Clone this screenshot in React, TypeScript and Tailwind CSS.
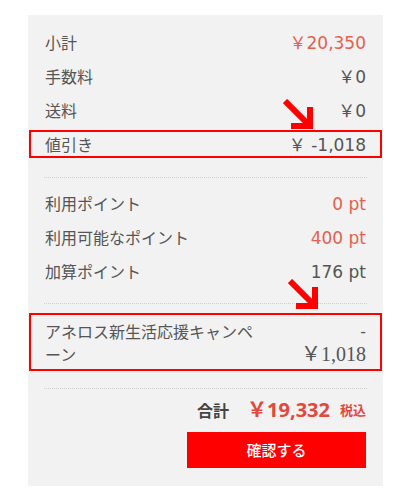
import type { ReactNode } from "react";

type RowProps = {
  label: ReactNode;
  value: ReactNode;
  red?: boolean;
  highlight?: boolean;
};

function Row({ label, value, red, highlight }: RowProps) {
  return (
    <div
      className={`h-[28px] flex items-center justify-between border-2 px-[14px] ${
        highlight ? "border-[#ff0000]" : "border-transparent"
      }`}
    >
      <span className="text-[16px] text-[#555]">{label}</span>
      <span
        className={`mt-[4px] font-['DejaVu_Sans','Noto_Sans_CJK_JP',sans-serif] text-[17px] ${
          red ? "text-[#e5604e]" : "text-[#555]"
        }`}
      >
        {value}
      </span>
    </div>
  );
}

function Arrow({ className }: { className: string }) {
  return (
    <svg
      className={`absolute ${className}`}
      width="31"
      height="31"
      viewBox="0 0 31 31"
      fill="none"
      stroke="#ff0000"
      strokeWidth="6"
    >
      <path d="M2 2 L25 25" />
      <path d="M27 8 V27 H8" strokeLinejoin="miter" />
    </svg>
  );
}

function Divider({ className }: { className: string }) {
  return <div className={`mx-[15px] border-t border-dotted border-[#cfcfcf] ${className}`} />;
}

export default function App() {
  return (
    <div className="min-h-screen bg-white pt-[15px] pl-[28px] font-['Noto_Sans_CJK_JP',sans-serif]">
      <div className="relative w-[355px] bg-[#f2f2f2] px-px pt-[13px] pb-[18px]">
        <div className="flex flex-col gap-[6px]">
          <Row label="小計" value="￥20,350" red />
          <Row label="手数料" value="￥0" />
          <Row label="送料" value="￥0" />
          <Row label="値引き" value="￥ -1,018" highlight />
        </div>

        <Divider className="mt-[19px]" />

        <div className="mt-[11px] flex flex-col gap-[6px]">
          <Row label="利用ポイント" value="0 pt" red />
          <Row label="利用可能なポイント" value="400 pt" red />
          <Row label="加算ポイント" value="176 pt" />
        </div>

        <Divider className="mt-[18px]" />

        <div className="mt-[9px] flex justify-between border-2 border-[#ff0000] px-[14px] pt-[5px] pb-[3px]">
          <span className="w-[215px] break-all text-[16px] leading-[23px] text-[#555]">
            アネロス新生活応援キャンペーン
          </span>
          <div className="flex flex-col items-end text-[#555] leading-[23px]">
            <span className="font-['DejaVu_Sans',sans-serif] text-[16px]">-</span>
            <span className="font-['Liberation_Serif','Noto_Sans_CJK_JP',serif] text-[20px]">
              ￥1,018
            </span>
          </div>
        </div>

        <Divider className="mt-[17px]" />

        <div className="mt-[7px] h-[28px] flex items-center justify-end gap-[10px] pr-[16px]">
          <span className="text-[16px] font-bold text-[#444]">合計</span>
          <span className="ml-[8px] font-['Open_Sans','Noto_Sans_CJK_JP',sans-serif] text-[20px] font-bold text-[#e2483b]">
            ￥19,332
          </span>
          <span className="text-[13px] font-bold text-[#e2483b]">税込</span>
        </div>

        <div className="mt-[8px] flex justify-end pr-[16px]">
          <button className="w-[179px] h-[36px] bg-[#ff0000] text-white text-[15px] font-medium">
            確認する
          </button>
        </div>

        <Arrow className="left-[255px] top-[84px]" />
        <Arrow className="left-[260px] top-[264px]" />
      </div>
    </div>
  );
}
